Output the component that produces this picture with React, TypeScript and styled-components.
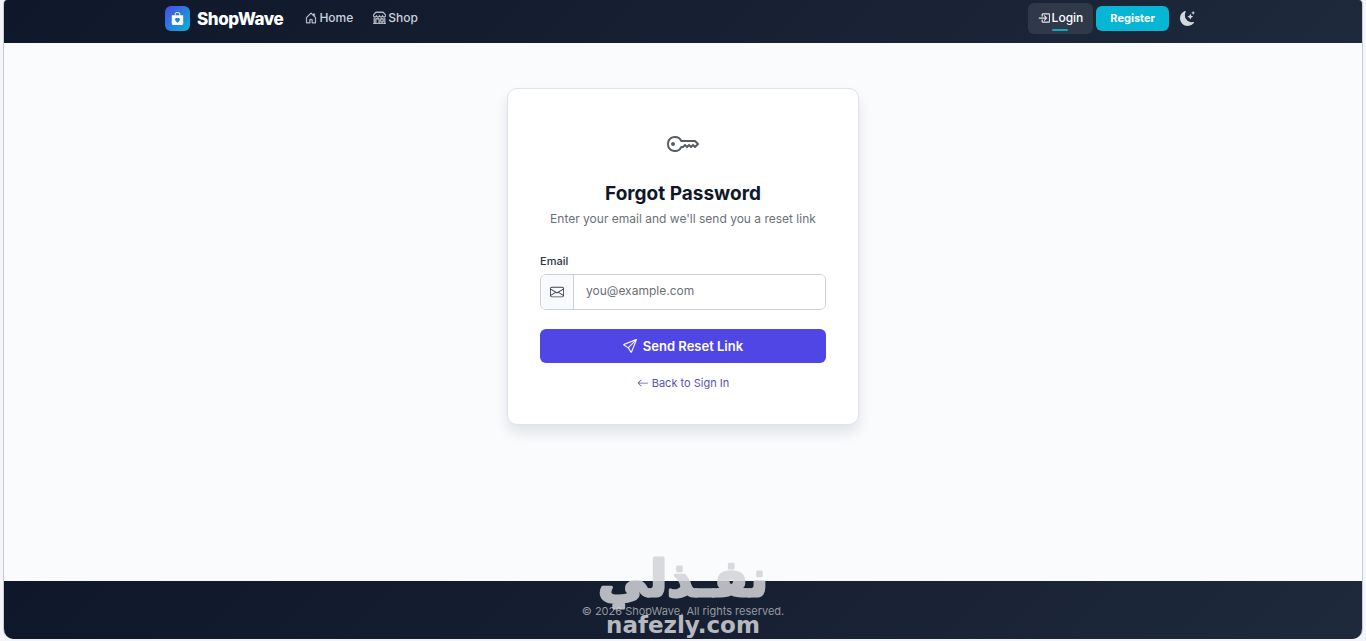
import React from 'react';
import styled, { createGlobalStyle } from 'styled-components';
import {
  BsArrowLeft,
  BsBagHeartFill,
  BsBoxArrowInRight,
  BsEnvelope,
  BsHouseDoor,
  BsKey,
  BsMoonStarsFill,
  BsSend,
  BsShop,
} from 'react-icons/bs';

const GlobalStyle = createGlobalStyle`
  *, *::before, *::after { box-sizing: border-box; }
  body {
    margin: 0;
    background: #f3f5fa;
    color: #0f172a;
    font-family: Inter, "Liberation Sans", sans-serif;
    font-size: 12px;
    line-height: 18px;
  }
  svg { display: block; flex: none; }
`;

const Frame = styled.div`
  display: flex;
  flex-direction: column;
  min-height: calc(100vh - 2px);
  margin: 0 3px 2px;
  border: 1px solid #c9cbd0;
  border-top: 0;
  border-bottom: 0;
  border-radius: 4px 4px 10px 10px;
  background: #fafbfd;
  overflow: hidden;
`;

const Header = styled.header`
  background: linear-gradient(135deg, #0f172a 0%, #1e293b 100%);
`;

const Container = styled.div`
  display: flex;
  align-items: center;
  width: 100%;
  max-width: 1056px;
  height: 43px;
  margin: 0 auto;
  padding: 0 10px 6px;
`;

const Brand = styled.a`
  display: flex;
  align-items: center;
  gap: 7px;
  margin-right: 12px;
  color: #fff;
  font-size: 17px;
  font-weight: 800;
  letter-spacing: -0.4px;
  text-decoration: none;
`;

const BrandMark = styled.span`
  display: grid;
  place-items: center;
  width: 25px;
  height: 25px;
  border-radius: 6px;
  background: linear-gradient(135deg, #4f46e5, #06b6d4);
`;

const Nav = styled.nav`
  display: flex;
  flex: 1;
  align-items: center;
`;

const Actions = styled.div`
  display: flex;
  align-items: center;
  gap: 3px;
`;

const NavLink = styled.a<{ $active?: boolean }>`
  position: relative;
  display: flex;
  align-items: center;
  gap: 2px;
  height: 31px;
  padding: 0 10px 2px;
  border-radius: 6px;
  background: ${(p) => (p.$active ? '#2f394a' : 'transparent')};
  color: ${(p) => (p.$active ? '#fff' : '#cbd0d9')};
  font-size: 12px;
  font-weight: 500;
  text-decoration: none;

  &::after {
    content: '';
    display: ${(p) => (p.$active ? 'block' : 'none')};
    position: absolute;
    bottom: 3px;
    left: calc(50% - 8px);
    width: 16px;
    height: 2px;
    border-radius: 2px;
    background: #12a9bd;
  }
`;

const RegisterLink = styled.a`
  padding: 3px 14px 4px;
  border-radius: 6px;
  background: #06b6d4;
  color: #fff;
  font-size: 11px;
  font-weight: 700;
  text-decoration: none;
`;

const ThemeButton = styled.button`
  display: grid;
  place-items: center;
  margin: 0 6px 0 8px;
  padding: 0;
  border: 0;
  background: none;
  color: #d3d7df;
`;

const Main = styled.main`
  display: flex;
  flex: 1;
  align-items: flex-start;
  justify-content: center;
  padding: 45px 16px;
`;

const Card = styled.section`
  width: 100%;
  max-width: 352px;
  padding: 39px 32px 32px;
  border: 1px solid #dfe3e6;
  border-radius: 10px;
  background: #fff;
  box-shadow: 0 8px 13px rgba(15, 23, 42, 0.1);
`;

const CardHead = styled.div`
  display: flex;
  flex-direction: column;
  align-items: center;
  margin-bottom: 24px;
  color: #6b7177;
  text-align: center;
`;

const Title = styled.h1`
  margin: 22px 0 4px;
  color: #0f172a;
  font-size: 19px;
  font-weight: 700;
  line-height: 24px;
`;

const Text = styled.p`
  margin: 0;
`;

const Label = styled.label`
  display: block;
  margin-bottom: 4px;
  color: #2c3540;
  font-size: 11px;
  font-weight: 500;
`;

const InputGroup = styled.div`
  display: flex;
  height: 36px;
  margin-bottom: 19px;
  border: 1px solid #cdd2d9;
  border-radius: 6px;
  overflow: hidden;
`;

const InputIcon = styled.span`
  display: grid;
  place-items: center;
  width: 33px;
  border-right: 1px solid #cdd2d9;
  background: #f8fafc;
  color: #3c444f;
`;

const Input = styled.input`
  flex: 1;
  min-width: 0;
  padding: 0 12px 2px;
  border: 0;
  outline: 0;
  background: #fff;
  color: #212529;
  font: inherit;

  &::placeholder { color: #6c7075; opacity: 1; }
`;

const SubmitButton = styled.button`
  display: flex;
  align-items: center;
  justify-content: center;
  gap: 6px;
  width: 100%;
  height: 34px;
  border: 0;
  border-radius: 6px;
  background: #4f46e5;
  color: #fff;
  font-family: inherit;
  font-size: 13px;
  font-weight: 600;
`;

const BackLink = styled.a`
  display: flex;
  align-items: center;
  justify-content: center;
  gap: 3px;
  margin-top: 11px;
  color: #5a52b5;
  font-size: 11px;
  text-decoration: none;
`;

const Footer = styled.footer`
  position: relative;
  padding: 21px 0 19px;
  background: linear-gradient(135deg, #0f172a 0%, #1e293b 100%);
  color: #94999f;
  font-size: 11px;
  text-align: center;
`;

const Watermark = styled.svg`
  position: absolute;
  bottom: 0;
  left: calc(50% - 90px);
  fill: #d3d4d8;
  stroke: #d3d4d8;
  stroke-linejoin: round;
  opacity: 0.85;
  overflow: visible;
`;

export default function App() {
  return (
    <>
      <GlobalStyle />
      <Frame>
        <Header>
          <Container>
            <Brand href="#">
              <BrandMark><BsBagHeartFill size={13} /></BrandMark>
              ShopWave
            </Brand>
            <Nav>
              <NavLink href="#"><BsHouseDoor size={12} strokeWidth={0.4} />Home</NavLink>
              <NavLink href="#"><BsShop size={13} strokeWidth={0.4} />Shop</NavLink>
            </Nav>
            <Actions>
              <NavLink href="#" $active><BsBoxArrowInRight size={12} strokeWidth={0.4} />Login</NavLink>
              <RegisterLink href="#">Register</RegisterLink>
              <ThemeButton aria-label="Toggle theme"><BsMoonStarsFill size={15} /></ThemeButton>
            </Actions>
          </Container>
        </Header>
        <Main>
          <Card>
            <CardHead>
              <BsKey size={32} color="#585d63" />
              <Title>Forgot Password</Title>
              <Text>Enter your email and we'll send you a reset link</Text>
            </CardHead>
            <form>
              <Label htmlFor="email">Email</Label>
              <InputGroup>
                <InputIcon><BsEnvelope size={14} /></InputIcon>
                <Input id="email" type="email" placeholder="you@example.com" />
              </InputGroup>
              <SubmitButton type="button"><BsSend size={14} strokeWidth={0.3} />Send Reset Link</SubmitButton>
            </form>
            <BackLink href="#"><BsArrowLeft size={12} />Back to Sign In</BackLink>
          </Card>
        </Main>
        <Footer>
          <Text>© 2026 ShopWave. All rights reserved.</Text>
          <Watermark width="180" height="120" viewBox="0 0 180 120" textAnchor="middle">
            <text x="90" y="77" direction="rtl" fontFamily="DejaVu Sans, sans-serif" fontSize="50" fontWeight="700" strokeWidth="3">نفـذلي</text>
            <text x="90" y="114" fontFamily="DejaVu Sans, sans-serif" fontSize="23" fontWeight="700" strokeWidth="0">nafezly.com</text>
          </Watermark>
        </Footer>
      </Frame>
    </>
  );
}
